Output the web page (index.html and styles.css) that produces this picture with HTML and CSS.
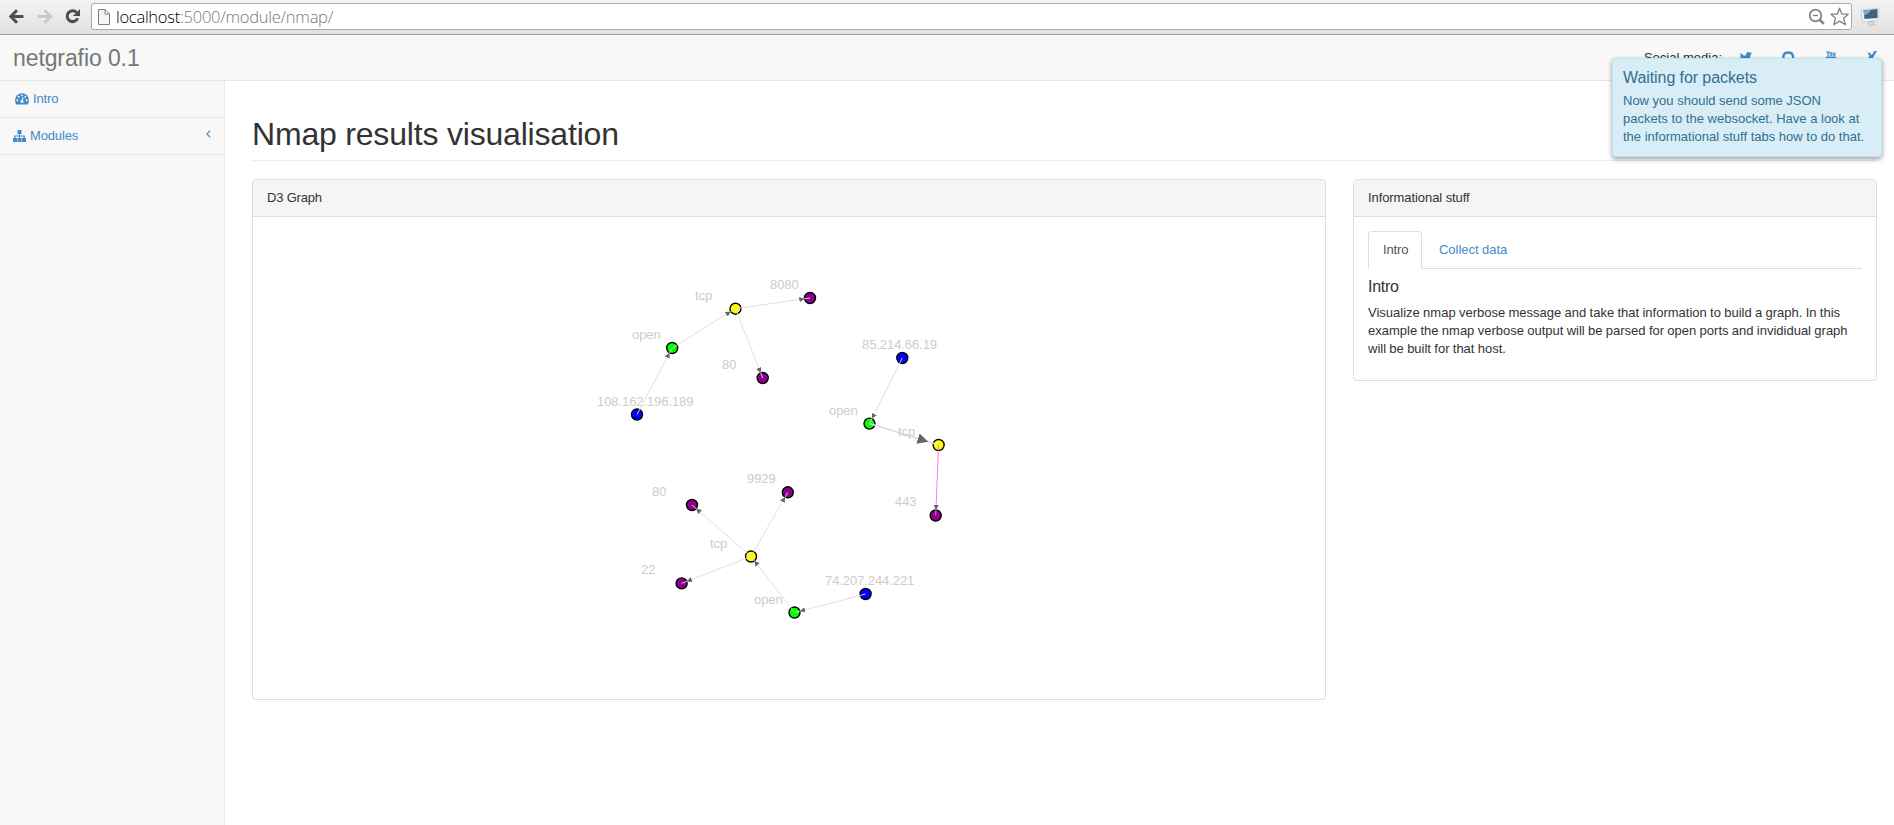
FILE: index.html
```html
<!DOCTYPE html>
<html lang="en">
<head>
<meta charset="utf-8">
<title>netgrafio</title>
<link rel="stylesheet" href="styles.css">
</head>
<body>
<div class="toolbar">
  <svg class="tool-nav" width="88" height="34" viewBox="0 0 88 34">
    <g fill="none" stroke-width="3">
      <path stroke="#4d4d4d" d="M23.500 16.500H11M17 10.200L10.800 16.500L17 22.800"/>
      <path stroke="#c9c9c9" d="M37.500 16.500H50.500M44.500 10.200L50.700 16.500L44.500 22.800"/>
      <path stroke="#4d4d4d" d="M76.600 12.600A5.400 5.400 0 1 0 77.600 18.200"/>
    </g>
    <path fill="#4d4d4d" d="M80 9V16H72.800Z"/>
  </svg>
  <div class="address">
    <svg class="page-icon" width="12" height="16" viewBox="0 0 12 16"><path fill="#f4f4f4" stroke="#808080" d="M.5.500H7L11.500 5V15.500H.5ZM7 .5V5H11.500"/></svg>
    <span class="url"><b>localhost</b>:5000/module/nmap/</span>
    <svg class="address-actions" width="40" height="20" viewBox="0 0 40 20">
      <g fill="none" stroke="#828282"><circle cx="6.500" cy="8.500" r="5.800" stroke-width="1.800"/><path stroke-width="2.600" d="M10.500 12.500L14.800 16.800"/><path stroke-width="1.400" d="M4 8.500H9"/>
      <path stroke-width="1.300" stroke-linejoin="round" d="M30.600 1.200L33 7.200H39.200L34.700 11.200L36.400 17.800L30.600 14.100L24.800 17.800L26.500 11.200L22 7.200H28.200Z"/></g>
    </svg>
  </div>
  <svg class="extension" width="20" height="20" viewBox="0 0 20 20"><path fill="#f2f2f2" stroke="#c4c4c4" stroke-width=".7" d="M1 3L19 1L18 13.500L2.500 15Z"/><path fill="#ddd" stroke="#aaa" stroke-width=".6" d="M8 15L13 14.500L13.500 16.500L15 17.500L9 18.500Z"/><path fill="#396583" d="M3.500 3.500L17.500 2V11L4.500 12Z"/><path fill="#82a9c0" d="M3.500 3.500L11 2.700L9 6L4 8.500Z"/></svg>
</div>
<header class="navbar">
  <div class="brand">netgrafio 0.1</div>
  <div class="social">
    <span class="social-label">Social media:</span>
    <svg class="social-icons" width="140" height="14" viewBox="0 0 140 14" fill="#428bca">
      <path d="M12 2.400L10.600 3.700C10.600 8.500 7 11.500 3.500 11.500C2 11.500.9 11.100 0 10.500C1.400 10.500 2.500 10.200 3.500 9.500C2.300 9.300 1.500 8.600 1.200 7.600H2.300C1 7.200.2 6.200.2 4.900L1.300 5.200C.2 4.300 0 3 .6 1.900C2 3.500 3.800 4.500 5.900 4.600C5.500 2.500 7 1 8.500 1C9.300 1 9.900 1.300 10.400 1.800L12 1.200L10.900 2.600Z"/>
      <path fill="none" stroke="#428bca" stroke-width="2.400" d="M44.700 12C42 5 43.500 1.500 48.200 1.500S54.500 5 51.700 12"/>
      <g fill="none" stroke="#428bca" stroke-width="1.100"><path d="M86.500 0L88 2.500V5M89.500 0L88 2.500M90.200 1.800H91.800V4.300H90.200ZM93.500 1.500V4.300H95V1.500"/></g>
      <path d="M86.500 5.500H95.500Q96.500 5.500 96.500 7V12H85.500V7Q85.500 5.500 86.500 5.500Z"/>
      <path d="M127.500 1.800H130.200L132 4.800L129.300 9.500H126.700L129.500 4.800ZM134.200 0H137L132.600 7.500L135.500 13H132.700L129.800 7.500Z"/>
    </svg>
  </div>
</header>
<div class="layout">
  <nav class="sidebar">
    <a class="menu-item intro"><svg width="14" height="12" viewBox="0 0 14 12"><path fill="#428bca" d="M0 7A7 6.800 0 0 1 14 7Q14 9.500 12.800 11.500H1.200Q0 9.500 0 7Z"/><g fill="#f8f8f8"><circle cx="2.300" cy="7.200" r="1"/><circle cx="3.700" cy="3.800" r="1"/><circle cx="10.300" cy="3.800" r="1"/><circle cx="11.700" cy="7.200" r="1"/><circle cx="7" cy="2.300" r=".9"/><path d="M7.600 4L8.500 4.200L7.900 7.200A1.500 1.500 0 1 1 6.700 7Z"/></g></svg>Intro</a>
    <a class="menu-item"><svg width="13" height="12" viewBox="0 0 13 12"><path fill="#428bca" d="M4.500 0H8.500V4H7V5.500H11.800V8H13V12H9V8H10.500V6.600H7V8H8.500V12H4.500V8H6V6.600H2.500V8H4V12H0V8H1.200V5.500H6V4H4.500Z"/></svg>Modules<svg class="caret" width="5" height="8" viewBox="0 0 5 8"><path fill="none" stroke="#428bca" stroke-width="1.200" d="M4.200.7L.9 4L4.200 7.300"/></svg></a>
  </nav>
  <main class="content">
    <h1>Nmap results visualisation</h1>
    <div class="columns">
      <section class="panel graph-panel">
        <div class="panel-heading">D3 Graph</div>
        <svg class="graph" width="1072" height="482" viewBox="253 217 1072 482">
          <defs>
            <marker id="arrow" viewBox="0 -5 10 10" refX="20" refY="0" markerWidth="6" markerHeight="6" orient="auto"><path d="M0,-5L10,0L0,5"/></marker>
          </defs>
          <g class="nodes">
            <circle class="port" cx="810" cy="298" r="5.500"/><circle class="port" cx="762.700" cy="378" r="5.500"/>
            <circle class="proto" cx="735.500" cy="308.700" r="5.500"/><circle class="state" cx="672.200" cy="348" r="5.500"/><circle class="host" cx="637" cy="414.500" r="5.500"/>
            <circle class="host" cx="902.300" cy="358" r="5.500"/><circle class="state" cx="869.500" cy="423.600" r="5.500"/><circle class="proto" cx="938.600" cy="445" r="5.500"/><circle class="port" cx="935.700" cy="515.500" r="5.500"/>
            <circle class="port" cx="787.800" cy="492.300" r="5.500"/><circle class="port" cx="692" cy="505" r="5.500"/><circle class="proto" cx="751" cy="556.500" r="5.500"/><circle class="port" cx="681.600" cy="583.400" r="5.500"/><circle class="state" cx="794.500" cy="612.500" r="5.500"/><circle class="host" cx="865.600" cy="594" r="5.500"/>
          </g>
          <g class="links">
            <path d="M637 414.500L672.200 348"/><path d="M672.200 348L735.500 308.700"/><path d="M735.500 308.700L810 298"/><path d="M735.500 308.700L762.700 378"/>
            <path d="M902.300 358L869.500 423.600"/><path class="wide" d="M869.500 423.600L938.600 445"/><path class="pink" d="M938.600 445L935.700 515.500"/>
            <path d="M865.600 594L794.500 612.500"/><path d="M794.500 612.500L751 556.500"/><path d="M751 556.500L681.600 583.400"/><path d="M751 556.500L692 505"/><path d="M751 556.500L787.800 492.300"/>
          </g>
          <g class="labels">
            <text x="597" y="406">108.162.196.189</text><text x="632" y="339">open</text><text x="695" y="300">tcp</text><text x="770" y="289">8080</text><text x="722" y="369">80</text>
            <text x="862" y="349">85.214.66.19</text><text x="829" y="415">open</text><text x="898" y="436">tcp</text><text x="895" y="506">443</text>
            <text x="747" y="483">9929</text><text x="652" y="496">80</text><text x="710" y="548">tcp</text><text x="641" y="574">22</text><text x="754" y="604">open</text><text x="825" y="585">74.207.244.221</text>
          </g>
        </svg>
      </section>
      <section class="panel info-panel">
        <div class="panel-heading">Informational stuff</div>
        <div class="panel-body">
          <div class="tabs"><a class="tab active">Intro</a><a class="tab">Collect data</a></div>
          <h4>Intro</h4>
          <p>Visualize nmap verbose message and take that information to build a graph. In this example the nmap verbose output will be parsed for open ports and invididual graph will be built for that host.</p>
        </div>
      </section>
    </div>
  </main>
</div>
<aside class="toast">
  <h4>Waiting for packets</h4>
  <p>Now you should send some JSON packets to the websocket. Have a look at the informational stuff tabs how to do that.</p>
</aside>
</body>
</html>
```
FILE: styles.css
```css
* { box-sizing: border-box; }
body { margin: 0; height: 825px; overflow: hidden; display: flex; flex-direction: column; background: #fff; color: #333; font: 13px/18px "Liberation Sans", Arial, sans-serif; letter-spacing: -.08px; }
svg { display: block; flex: none; }
h1, h4, p { margin: 0; font-weight: 400; }
.toolbar { height: 35px; flex: none; display: flex; background: linear-gradient(#f3f3f3, #e1e1e1); border-bottom: 1px solid #a0a0a0; }
.address { height: 27px; width: 1761px; margin: 3px 0 0 3px; padding: 0 2px 0 6px; display: flex; align-items: center; background: #fff; border: 1px solid #a9a9a9; border-radius: 3px; }
.url { margin-left: 6px; flex: 1; font: 300 16.5px/24px "Open Sans", sans-serif; letter-spacing: -.27px; color: #777; white-space: nowrap; }
.url b { font-weight: 300; color: #000; }
.extension { margin: 7px 0 0 8px; }
.navbar { height: 46px; flex: none; display: flex; justify-content: space-between; background: #f8f8f8; border-bottom: 1px solid #e7e7e7; }
.brand { padding: 14px 0 0 13px; color: #777; font-size: 23px; line-height: 18px; letter-spacing: -.1px; }
.social { display: flex; padding: 14px 14px 0 0; }
.social-label { margin-right: 18px; letter-spacing: 0; }
.social-icons { margin-top: 2px; }
.layout { flex: 1; display: flex; }
.sidebar { width: 225px; flex: none; background: #f8f8f8; border-right: 1px solid #e7e7e7; }
.menu-item { height: 37px; padding: 0 13px; display: flex; align-items: center; gap: 4px; color: #428bca; border-bottom: 1px solid #e7e7e7; letter-spacing: -.15px; }
.menu-item.intro { padding-left: 15px; }
.caret { margin: -4px 0 0 auto; }
.content { flex: 1; padding: 0 17px 0 27px; }
h1 { height: 80px; padding-top: 35px; font-size: 32px; line-height: 36px; letter-spacing: -.19px; border-bottom: 1px solid #eee; }
.columns { display: flex; align-items: flex-start; gap: 27px; margin-top: 18px; }
.panel { border: 1px solid #ddd; border-radius: 4px; overflow: hidden; }
.graph-panel { width: 1074px; }
.info-panel { width: 524px; height: 202px; }
.panel-heading { height: 37px; padding: 9px 14px; background: #f5f5f5; border-bottom: 1px solid #ddd; }
.graph-panel .panel-heading { letter-spacing: -.2px; }
.panel-body { padding: 14px; }
.tabs { display: flex; gap: 2px; height: 38px; border-bottom: 1px solid #ddd; }
.tab { height: 38px; padding: 9px 14px; color: #428bca; border: 1px solid transparent; border-radius: 4px 4px 0 0; letter-spacing: -.04px; }
.tab.active { width: 54px; color: #555; background: #fff; border-color: #ddd #ddd #fff; letter-spacing: -.15px; }
h4 { font-size: 16px; line-height: 18px; }
.panel-body h4 { margin: 9px 0 8px; letter-spacing: -.3px; }
.panel-body p { letter-spacing: 0; word-spacing: -.3px; }
.nodes circle { stroke: #000; stroke-width: 1.4; }
.host { fill: #00f; }
.state { fill: #0f0; }
.proto { fill: #ff0; }
.port { fill: #8b008b; }
.links > path { fill: none; stroke: #ddd; stroke-width: .9; marker-end: url(#arrow); }
.links > .wide { stroke-width: 1.8; }
.links > .pink { stroke: #ff69ee; }
marker path { fill: #666; }
.labels { fill: #ccc; font-size: 13px; }
.toast { position: absolute; left: 1612px; top: 58px; width: 270px; height: 99px; padding: 10px 16px 10px 10px; color: #31708f; background: #d9edf7; border: 1px solid #bce8f1; border-radius: 4px; box-shadow: 0 2px 5px rgba(0,0,0,.4); }
.toast h4 { margin-bottom: 5px; }
.toast p { letter-spacing: 0; }
```
